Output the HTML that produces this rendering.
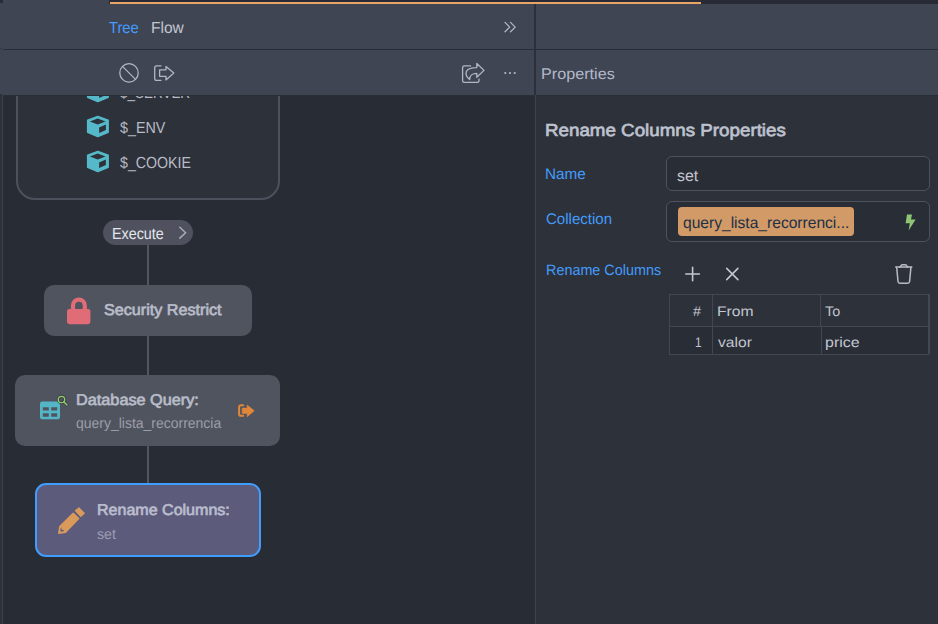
<!DOCTYPE html>
<html>
<head>
<meta charset="utf-8">
<style>
html,body{margin:0;padding:0;}
body{width:938px;height:624px;overflow:hidden;background:#282c35;font-family:"Liberation Sans",sans-serif;position:relative;}
.abs{position:absolute;}
.t{text-rendering:geometricPrecision;position:absolute;white-space:nowrap;line-height:1;transform-origin:0 50%;}
#leftbg{left:0;top:95px;width:535px;height:529px;background:#282c35;}
#rightbg{left:536px;top:95px;width:402px;height:529px;background:#2d313a;}
#vsep2{left:535px;top:95px;width:1px;height:529px;background:#3e424f;z-index:11;}
#edge0{left:0;top:95px;width:2px;height:529px;background:#2d313a;}
#edge1{left:2px;top:95px;width:1px;height:529px;background:#3e424f;}
#hdr,#hsep,#vsep1,#topdark,#toporange,#tl{z-index:10;}
.top{z-index:11;}
#hdr{left:0;top:0;width:938px;height:95px;background:#3f4553;}
#hbot{left:0;top:95px;width:938px;height:1px;background:#2a2d36;z-index:10;}
#hnotch{left:0;top:48px;width:2px;height:1px;background:#343844;z-index:10;}
#hsep{left:3px;top:49px;width:935px;height:1px;background:#2a2d37;}
#vsep1{left:534px;top:4px;width:2px;height:91px;background:#2d303b;}
#topdark{left:109px;top:0;width:829px;height:4px;background:#282b35;}
#toporange{left:110px;top:2px;width:591px;height:2px;background:#e8a467;}
#tl{left:0;top:0;width:3px;height:3px;background:#2a2d37;}
#group{left:16px;top:60px;width:260px;height:136px;border:2px solid #4e515d;border-radius:19px;background:#2d313a;}
.conn{background:#52565f;width:2px;left:147px;}
.node{background:#50545f;border-radius:9px;}
</style>
</head>
<body>
<div class="abs" id="leftbg"></div>
<div class="abs" id="rightbg"></div>
<div class="abs" id="vsep2"></div>
<div class="abs" id="edge0"></div>
<div class="abs" id="edge1"></div>

<!-- group box w/ tree items -->
<div class="abs" id="group"></div>

<!--ICONS_LEFT-->
<!-- connectors -->
<div class="abs conn" style="top:245px;height:40.5px;"></div>
<div class="abs conn" style="top:335.5px;height:39.5px;"></div>
<div class="abs conn" style="top:445.5px;height:38.5px;"></div>

<!-- execute pill -->
<div class="abs" style="left:102.8px;top:220.2px;width:90.1px;height:25.1px;border-radius:13px;background:#4f525e;"></div>
<!-- security node -->
<div class="abs node" style="left:44px;top:285.1px;width:208.3px;height:50.6px;border-radius:10px;"></div>
<!-- db query node -->
<div class="abs node" style="left:14.9px;top:374.9px;width:265.3px;height:70.8px;border-radius:10px;"></div>
<!-- rename node -->
<div class="abs" style="left:35px;top:483.4px;width:221.8px;height:69.8px;border:2.2px solid #409cfd;border-radius:11px;background:#5c5b7b;"></div>


<!-- left panel icons -->
<svg class="abs" style="left:0;top:60px;" width="300" height="500" viewBox="0 60 300 500">
<g transform="translate(0,-35)">
<path fill-rule="evenodd" fill="#56b9c9" stroke="#56b9c9" stroke-width="1.6" stroke-linejoin="round" d="M97.8 116.5 L108.1 120.3 L108.1 132.2 L97.8 136.4 L87.7 132.2 L87.7 120.3 Z"/>
<path fill="#2d313a" d="M89.9 121.4 L97.7 118.4 L105.6 121.4 L97.7 124.4 Z"/>
<path fill="#2d313a" d="M99.1 127.4 L105.9 124.6 L105.9 130 L99.1 133 Z"/>
</g><g transform="translate(0,0)">
<path fill-rule="evenodd" fill="#56b9c9" stroke="#56b9c9" stroke-width="1.6" stroke-linejoin="round" d="M97.8 116.5 L108.1 120.3 L108.1 132.2 L97.8 136.4 L87.7 132.2 L87.7 120.3 Z"/>
<path fill="#2d313a" d="M89.9 121.4 L97.7 118.4 L105.6 121.4 L97.7 124.4 Z"/>
<path fill="#2d313a" d="M99.1 127.4 L105.9 124.6 L105.9 130 L99.1 133 Z"/>
</g><g transform="translate(0,35)">
<path fill-rule="evenodd" fill="#56b9c9" stroke="#56b9c9" stroke-width="1.6" stroke-linejoin="round" d="M97.8 116.5 L108.1 120.3 L108.1 132.2 L97.8 136.4 L87.7 132.2 L87.7 120.3 Z"/>
<path fill="#2d313a" d="M89.9 121.4 L97.7 118.4 L105.6 121.4 L97.7 124.4 Z"/>
<path fill="#2d313a" d="M99.1 127.4 L105.9 124.6 L105.9 130 L99.1 133 Z"/>
</g>
<!-- execute chevron -->
<path d="M179.8 227.3 L185.6 232.7 L179.8 238.1" fill="none" stroke="#a9acb7" stroke-width="1.5" stroke-linecap="round" stroke-linejoin="round"/>
<!-- lock -->
<g fill="#e06c78">
<rect x="67" y="308.9" width="23.4" height="15.3" rx="2.4"/>
<path fill-rule="evenodd" d="M70.9 310 L70.9 305.4 A8 8 0 0 1 86.9 305.4 L86.9 310 L82.7 310 L82.7 305.6 A3.8 3.8 0 0 0 75.1 305.6 L75.1 310 Z"/>
</g>
<!-- table icon -->
<path fill-rule="evenodd" fill="#52b6c6" d="M42.2 401.6 L57.8 401.6 Q60 401.6 60 403.8 L60 417.1 Q60 419.3 57.8 419.3 L42.2 419.3 Q40 419.3 40 417.1 L40 403.8 Q40 401.6 42.2 401.6 Z M42.8 407.2 L42.8 410.4 L48.8 410.4 L48.8 407.2 Z M51.2 407.2 L51.2 410.4 L57.2 410.4 L57.2 407.2 Z M42.8 413.2 L42.8 416.7 L48.8 416.7 L48.8 413.2 Z M51.2 413.2 L51.2 416.7 L57.2 416.7 L57.2 413.2 Z"/>
<g fill="none" stroke-linecap="round">
<circle cx="61.5" cy="399.5" r="3.2" stroke="#3b3e49" stroke-width="3"/>
<path d="M63.9 401.9 L67 405" stroke="#3b3e49" stroke-width="3"/>
<circle cx="61.5" cy="399.5" r="3.2" stroke="#8fcf6a" stroke-width="1.3"/>
<path d="M63.9 401.9 L67 405" stroke="#8fcf6a" stroke-width="1.4"/>
</g>
<!-- orange signout -->
<path d="M243.2 405.3 L241 405.3 Q239.1 405.3 239.1 407.2 L239.1 413.9 Q239.1 415.8 241 415.8 L243.2 415.8" fill="none" stroke="#e0873a" stroke-width="2" stroke-linecap="round"/>
<path d="M242.2 408.1 L247.2 408.1 L247.2 405 L254.2 410.7 L247.2 416.7 L247.2 413.4 L242.2 413.4 Z" fill="#e0873a" stroke="#e0873a" stroke-width="0.6" stroke-linejoin="round"/>
<!-- pencil -->
<g fill="#d99a5b" stroke="#d99a5b" stroke-width="1.4" stroke-linejoin="round">
<path d="M75.6 510.7 L78.9 508 L84.1 513.2 L80.8 516.2 Z"/>
<path d="M73.2 513.3 L78.7 518.4 L65.5 532.3 L58.8 533.2 L59.8 526.5 Z"/>
</g>
<path d="M61.3 527.3 L61.6 529.8 L64.2 530.3 L63.2 531.6 L60.6 531.6 L60.3 528.9 Z" fill="#5c5b7b"/>
</svg>
<!-- header on top -->
<div class="abs" id="hdr"></div>
<div class="abs" id="hsep"></div>
<div class="abs" id="hnotch"></div>
<div class="abs" style="left:0;top:94px;width:2px;height:2px;background:#2d313a;z-index:11;"></div>
<div class="abs" style="left:2px;top:94px;width:1px;height:2px;background:#3e424f;z-index:11;"></div>
<div class="abs" id="hbot"></div>
<div class="abs" id="vsep1"></div>
<div class="abs" id="topdark"></div>
<div class="abs" id="toporange"></div>
<div class="abs" id="tl"></div>

<!-- right panel form -->
<div class="abs" style="left:666px;top:156px;width:262px;height:33px;border:1px solid #4e525e;border-radius:6px;background:#292d36;"></div>
<div class="abs" style="left:666px;top:201px;width:262px;height:39px;border:1px solid #4e525e;border-radius:6px;background:#292d36;"></div>
<div class="abs" style="left:678px;top:207px;width:176px;height:29px;border-radius:4px;background:#d19a66;"></div>
<svg class="abs" style="left:905px;top:213.5px;" width="11" height="17" viewBox="0 0 11 17"><path d="M2 0.5 L7 0.5 L6 5.5 L10.6 5.5 L3.6 16.6 L4.8 9.2 L0.6 9.2 Z" fill="#8dc572"/></svg>
<!-- table -->
<div class="abs" style="left:669px;top:294px;width:261px;height:60.8px;background:#2d313a;border:1px solid #434753;border-right-width:2px;border-bottom-width:1.2px;border-radius:0 0 2px 0;box-sizing:border-box;"></div>
<div class="abs" style="left:670px;top:327px;width:258px;height:26.6px;background:#292d36;"></div>
<div class="abs" style="left:669px;top:326px;width:260px;height:1px;background:#434753;"></div>
<div class="abs" style="left:712px;top:294px;width:1px;height:60px;background:#434753;"></div>
<div class="abs" style="left:820px;top:294px;width:1px;height:33px;background:#434753;"></div>
<div class="abs" style="left:821.2px;top:327px;width:1px;height:27px;background:#434753;"></div>

<!-- right panel icons -->
<svg class="abs" style="left:680px;top:260px;" width="240" height="30" viewBox="680 260 240 30" fill="none" stroke="#c3c6d0" stroke-width="1.6" stroke-linecap="round" stroke-linejoin="round">
<path d="M685.8 274 L699.4 274 M692.6 267.2 L692.6 280.8"/>
<path d="M726.7 268.4 L737.9 279.6 M737.9 268.4 L726.7 279.6"/>
<g stroke-width="1.5" stroke="#b9bcc7">
<path d="M895.7 267.1 L911.8 267.1"/>
<path d="M899.9 267.1 L901.3 265.3 Q901.7 264.8 902.5 264.8 L905.1 264.8 Q905.9 264.8 906.3 265.3 L907.7 267.1"/>
<path d="M896.7 267.4 L898 281.5 Q898.2 283.2 899.9 283.2 L907.7 283.2 Q909.4 283.2 909.6 281.5 L910.9 267.4"/>
</g>
</svg>
<!-- header icons -->
<svg class="abs top" style="left:100px;top:55px;" width="100" height="36" viewBox="100 55 100 36" fill="none" stroke="#b4b7c2" stroke-width="1.3" stroke-linecap="round" stroke-linejoin="round">
<circle cx="129" cy="72.9" r="9.2"/>
<path d="M122.5 66.4 L135.5 79.4"/>
<path d="M161 65.8 L156.6 65.8 Q154.7 65.8 154.7 67.7 L154.7 78.4 Q154.7 80.3 156.6 80.3 L161 80.3"/>
<path d="M159.6 69.8 L166 69.8 L166 66.4 L173.8 73.1 L166 79.9 L166 76.3 L159.6 76.3 Z"/>
</svg>
<svg class="abs top" style="left:455px;top:15px;" width="70" height="75" viewBox="455 15 70 75" fill="none" stroke="#b4b7c2" stroke-width="1.3" stroke-linecap="round" stroke-linejoin="round">
<path d="M505 22.4 L509.7 27.1 L505 31.8 M510.5 22.4 L515.2 27.1 L510.5 31.8"/>
<path d="M470.6 65.9 L464.3 65.9 Q462.6 65.9 462.6 67.6 L462.6 80.7 Q462.6 82.4 464.3 82.4 L477.3 82.4 Q479 82.4 479 80.7 L479 79.2"/>
<path d="M476.8 63.5 L484 70.4 L476.8 77.2 L476.8 73.4 C472.5 73.4 470 74.5 469.6 79.6 C466.5 77 465.6 74 466.3 71.8 C467.3 68.8 471 67.6 476.8 67.6 Z"/>
<g fill="#b4b7c2" stroke="none"><circle cx="505.3" cy="73" r="1.1"/><circle cx="510" cy="73" r="1.1"/><circle cx="514.7" cy="73" r="1.1"/></g>
</svg>
<!--ICONS2-->
<span class="t top" style="left:109.27px;top:21.00px;font-size:16px;font-weight:400;color:#439cfd;transform:scaleX(0.9216);">Tree</span>
<span class="t top" style="left:151.19px;top:21.00px;font-size:16px;font-weight:400;color:#c3c6d0;transform:scaleX(0.9692);">Flow</span>
<span class="t top" style="left:540.89px;top:67.00px;font-size:15.5px;font-weight:400;color:#b3b9c8;transform:scaleX(1.0444);">Properties</span>
<span class="t" style="left:119.99px;top:85.50px;font-size:16px;font-weight:400;color:#b9bcc7;transform:scaleX(0.8413);">$_SERVER</span>
<span class="t" style="left:119.98px;top:120.50px;font-size:16px;font-weight:400;color:#b9bcc7;transform:scaleX(0.8935);">$_ENV</span>
<span class="t" style="left:119.98px;top:155.50px;font-size:16px;font-weight:400;color:#b9bcc7;transform:scaleX(0.8861);">$_COOKIE</span>
<span class="t" style="left:112.08px;top:226.50px;font-size:16px;font-weight:400;color:#e4e6ec;transform:scaleX(0.8951);">Execute</span>
<span class="t" style="left:104.24px;top:302.50px;font-size:15.6px;font-weight:400;-webkit-text-stroke:0.7px #b8bcc8;color:#b8bcc8;transform:scaleX(1.0361);">Security Restrict</span>
<span class="t" style="left:75.55px;top:393.00px;font-size:15.5px;font-weight:400;-webkit-text-stroke:0.7px #b8bcc8;color:#b8bcc8;transform:scaleX(1.0487);">Database Query:</span>
<span class="t" style="left:76.12px;top:416.50px;font-size:14.6px;font-weight:400;color:#9b9ea9;transform:scaleX(0.9574);">query_lista_recorrencia</span>
<span class="t" style="left:96.97px;top:503.00px;font-size:15.5px;font-weight:400;-webkit-text-stroke:0.7px #babdce;color:#babdce;transform:scaleX(1.0345);">Rename Columns:</span>
<span class="t" style="left:97.01px;top:527.50px;font-size:14.6px;font-weight:400;color:#9d9db2;transform:scaleX(0.9737);">set</span>
<span class="t" style="left:545.21px;top:122.00px;font-size:17.3px;font-weight:400;-webkit-text-stroke:0.7px #bec2ce;color:#bec2ce;transform:scaleX(1.0854);">Rename Columns Properties</span>
<span class="t" style="left:545.04px;top:166.50px;font-size:15.2px;font-weight:400;color:#439cfd;transform:scaleX(1.0078);">Name</span>
<span class="t" style="left:676.99px;top:168.50px;font-size:15.7px;font-weight:400;color:#c3c6d0;transform:scaleX(1.0173);">set</span>
<span class="t" style="left:545.57px;top:212.00px;font-size:15.4px;font-weight:400;color:#439cfd;transform:scaleX(0.9764);">Collection</span>
<span class="t" style="left:683.07px;top:216.00px;font-size:16px;font-weight:400;color:#1e3046;transform:scaleX(0.9739);">query_lista_recorrenci...</span>
<span class="t" style="left:545.60px;top:263.00px;font-size:15px;font-weight:400;color:#439cfd;transform:scaleX(0.9590);">Rename Columns</span>
<span class="t" style="left:693.40px;top:304.00px;font-size:14px;font-weight:400;color:#c3c6d0;transform:scaleX(1.0194);">#</span>
<span class="t" style="left:716.70px;top:304.00px;font-size:14px;font-weight:400;color:#c3c6d0;transform:scaleX(1.1213);">From</span>
<span class="t" style="left:825.44px;top:304.00px;font-size:14px;font-weight:400;color:#c3c6d0;transform:scaleX(1.0286);">To</span>
<span class="t" style="left:694.95px;top:334.50px;font-size:14px;font-weight:400;color:#c3c6d0;transform:scaleX(0.8500);">1</span>
<span class="t" style="left:718.02px;top:334.50px;font-size:14px;font-weight:400;color:#c3c6d0;transform:scaleX(1.1160);">valor</span>
<span class="t" style="left:825.36px;top:334.50px;font-size:14px;font-weight:400;color:#c3c6d0;transform:scaleX(1.1409);">price</span>

</body>
</html>
